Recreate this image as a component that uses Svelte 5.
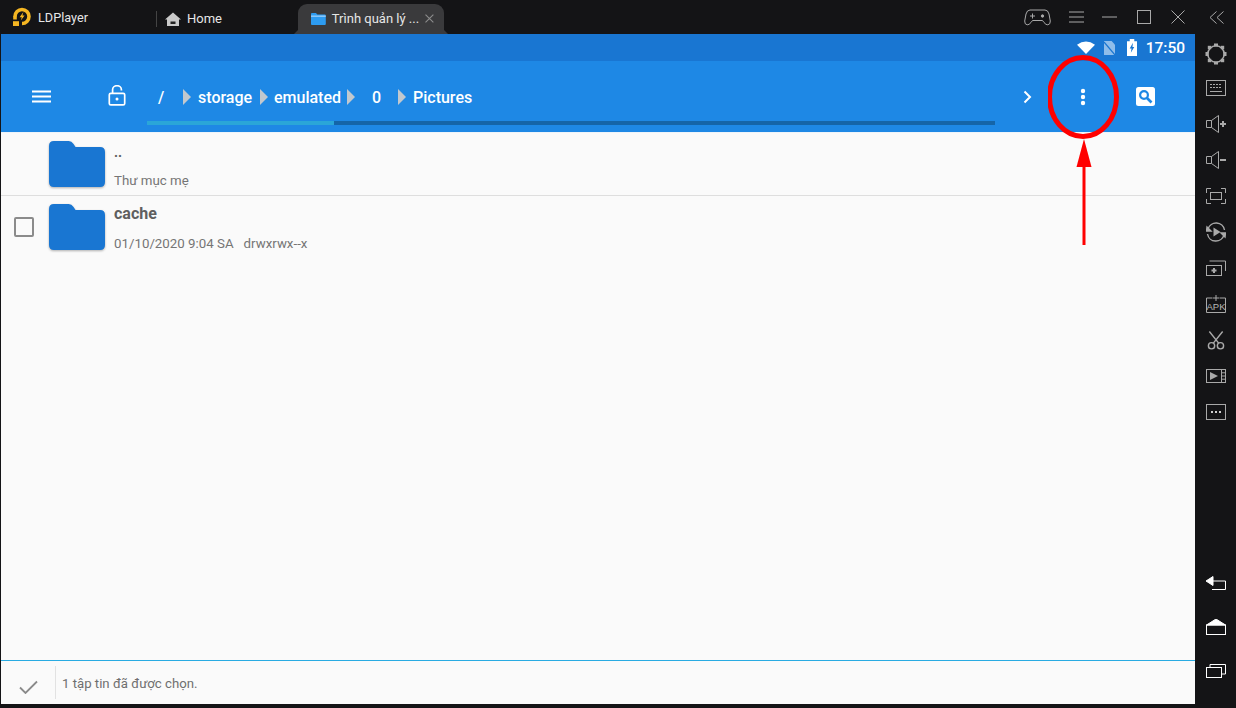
<script>
  const crumbs = [
    { t: '/', cls: 'slash' },
    { t: 'storage', cls: 'c1' },
    { t: 'emulated', cls: 'c2' },
    { t: '0', cls: 'zero' },
    { t: 'Pictures', cls: 'c4' }
  ];
  const folderPath = 'M0 5 Q0 0 5 0 H20 Q23 0 25 3 L27 6 H52 Q57 6 57 11 V41 Q57 46 52 46 H5 Q0 46 0 41Z';
</script>

<div class="win">
  <header class="title">
    <div class="brand">
      <svg width="22" height="22" viewBox="0 0 22 22">
        <path d="M3 10.5 A7 7 0 1 1 10 17.5" fill="none" stroke="#f5b622" stroke-width="3.6"/>
        <rect x="1.2" y="10" width="3.6" height="3.5" fill="#f5b622"/>
        <rect x="1" y="15.2" width="6" height="4.8" fill="#f5b622"/>
        <path d="M11.4 6 L7.6 11.2 H9.8 L8.8 14.6 L12.6 9.6 H10.4Z" fill="#f5b622"/>
      </svg>
      <span>LDPlayer</span>
    </div>
    <i class="sep"></i>
    <div class="home">
      <svg width="16" height="14" viewBox="0 0 16 14"><path d="M8 0.5 L16 7.5 H14 V14 H2 V7.5 H0Z" fill="#c9c9c9"/><rect x="5.5" y="9.5" width="5" height="2.5" fill="#222"/></svg>
      <span>Home</span>
    </div>
    <div class="tab">
      <svg width="15" height="12" viewBox="0 0 15 12"><path d="M0 1 Q0 0 1 0 H5 L6.5 1.5 H14 Q15 1.5 15 2.5 V11 Q15 12 14 12 H1 Q0 12 0 11Z" fill="#2d9bf0"/><rect x="0" y="2.6" width="15" height="1" fill="#bfe0fb"/></svg>
      <span>Trình quản lý ...</span>
      <svg class="x" width="9" height="9" viewBox="0 0 9 9"><path d="M0.5 0.5 L8.5 8.5 M8.5 0.5 L0.5 8.5" stroke="#8d8d8d" stroke-width="1.1"/></svg>
    </div>
    <div class="controls">
      <svg width="27" height="17" viewBox="0 0 27 17" fill="none" stroke="#a9a9a9" stroke-width="1"><path d="M6 1 H21 Q24 1 25 5 L26.3 12 Q26.5 15.5 23.8 15.8 Q22 16 20 13.5 L18.5 11.5 H8.5 L7 13.5 Q5 16 3.2 15.8 Q0.5 15.5 0.7 12 L2 5 Q3 1 6 1Z"/><path d="M6 7 H11 M8.5 4.5 V9.5"/><circle cx="18.5" cy="7" r="1.2" fill="#a9a9a9"/></svg>
      <svg width="15" height="12" viewBox="0 0 15 12" stroke="#a9a9a9"><path d="M0 1 H15 M0 6 H15 M0 11 H15"/></svg>
      <svg width="15" height="2" viewBox="0 0 15 2" stroke="#a9a9a9"><path d="M0 1 H15"/></svg>
      <svg width="14" height="14" viewBox="0 0 14 14" fill="none" stroke="#a9a9a9"><rect x="0.5" y="0.5" width="13" height="13"/></svg>
      <svg width="14" height="14" viewBox="0 0 14 14" stroke="#a9a9a9"><path d="M0.5 0.5 L13.5 13.5 M13.5 0.5 L0.5 13.5"/></svg>
      <svg class="collapse" width="15" height="13" viewBox="0 0 15 13" fill="none" stroke="#a9a9a9"><path d="M7.5 0.5 L1 6.5 L7.5 12.5 M14.5 0.5 L8 6.5 L14.5 12.5"/></svg>
    </div>
  </header>

  <div class="body">
    <main class="screen">
      <div class="status">
        <svg width="18" height="13" viewBox="0 0 20 14" preserveAspectRatio="none"><path d="M0 4 Q10 -3 20 4 L10 14Z" fill="#fff"/></svg>
        <svg class="nosim" width="11" height="14" viewBox="0 0 13 15" preserveAspectRatio="none"><path d="M0 0 H9 L13 4 V15 H0Z" fill="#8fbdea"/><path d="M0 1 L13 15" stroke="#1976d2" stroke-width="1.4"/></svg>
        <svg class="batt" width="10" height="17" viewBox="0 0 11 16" preserveAspectRatio="none"><path d="M3 0 H8 V2 H11 V16 H0 V2 H3Z" fill="#fff"/><path d="M6.5 3.5 L3 9 H5 L4.2 13 L8 7.5 H6Z" fill="#1976d2"/></svg>
        <span class="clock">17:50</span>
      </div>

      <div class="appbar">
        <div class="toolrow">
          <svg class="menu" width="19" height="13" viewBox="0 0 19 13" stroke="#fff" stroke-width="2"><path d="M0 1.5 H19 M0 6.5 H19 M0 11.5 H19"/></svg>
          <svg class="lock" width="18" height="21" viewBox="0 0 18 21" fill="none" stroke="#fff" stroke-width="1.7"><rect x="1.3" y="8.3" width="15.4" height="11.6" rx="1.5"/><path d="M4.6 8 V4.8 A4.4 4.1 0 0 1 13.4 4.8 V5.6"/><circle cx="9" cy="14" r="1.5" fill="#fff" stroke="none"/></svg>
          <nav class="crumbs">
            {#each crumbs as c, i}
              {#if i > 0}<i class="arrow a{i}"></i>{/if}
              <span class={c.cls}>{c.t}</span>
            {/each}
          </nav>
          <svg class="more" width="9" height="14" viewBox="0 0 9 14" fill="none" stroke="#fff" stroke-width="2"><path d="M1.5 1.5 L7 7 L1.5 12.5"/></svg>
          <svg class="dots" width="6" height="18" viewBox="0 0 6 18" fill="#fff"><circle cx="3" cy="3" r="2.2"/><circle cx="3" cy="9" r="2.2"/><circle cx="3" cy="15" r="2.2"/></svg>
          <svg class="search" width="19" height="19" viewBox="0 0 19 19"><rect width="19" height="19" rx="2.5" fill="#fff"/><circle cx="8" cy="8" r="3.9" fill="none" stroke="#1e88e5" stroke-width="2.2"/><path d="M11 11 L15.5 15.5" stroke="#1e88e5" stroke-width="2.6"/></svg>
        </div>
        <div class="progress"><div class="fill"></div></div>
      </div>

      <div class="list">
        <div class="row first">
          <span class="check none"></span>
          <svg class="folder" width="56" height="46" viewBox="0 0 57 46" preserveAspectRatio="none"><path d={folderPath} fill="#1976d2"/></svg>
          <div class="meta">
            <div class="name up">..</div>
            <div class="sub">Thư mục mẹ</div>
          </div>
        </div>
        <div class="row">
          <span class="check"></span>
          <svg class="folder" width="56" height="46" viewBox="0 0 57 46" preserveAspectRatio="none"><path d={folderPath} fill="#1976d2"/></svg>
          <div class="meta">
            <div class="name">cache</div>
            <div class="sub">01/10/2020 9:04 SA<span class="perm">drwxrwx--x</span></div>
          </div>
        </div>
      </div>

      <footer class="foot">
        <svg class="tick" width="19" height="14" viewBox="0 0 19 14" fill="none" stroke="#8a8a8a" stroke-width="1.8"><path d="M1 7.5 L6.5 13 L18 1.5"/></svg>
        <i class="vr"></i>
        <span class="msg">1 tập tin đã được chọn.</span>
      </footer>
    </main>

    <aside class="side">
      <div class="tools">
        <div class="ti gear"><svg width="22" height="22" viewBox="0 0 22 22" fill="none" stroke="#a9a9a9"><circle cx="11" cy="11" r="8.2" stroke-width="1.6"/><g fill="#a9a9a9" stroke="none"><rect x="9" y="0.5" width="4" height="3"/><rect x="9" y="18.5" width="4" height="3"/><rect x="0.5" y="9" width="3" height="4"/><rect x="18.5" y="9" width="3" height="4"/><rect x="2.8" y="2.8" width="3.4" height="3.4"/><rect x="15.8" y="2.8" width="3.4" height="3.4"/><rect x="2.8" y="15.8" width="3.4" height="3.4"/><rect x="15.8" y="15.8" width="3.4" height="3.4"/></g></svg></div>
        <div class="ti"><svg width="20" height="16" viewBox="0 0 20 16" fill="none" stroke="#a9a9a9"><rect x="0.5" y="0.5" width="19" height="15"/><path d="M4 4.5 H16 M4 7.5 H16" stroke-dasharray="2 1"/><path d="M4 11.5 H16"/></svg></div>
        <div class="ti"><svg width="20" height="18" viewBox="0 0 20 18" fill="none" stroke="#a9a9a9"><path d="M0.5 5.5 H5.5 V12.5 H0.5Z M5.5 5.5 L12.5 0.5 V17.5 L5.5 12.5"/><path d="M14 9 H20 M17 6 V12" stroke-width="2"/></svg></div>
        <div class="ti"><svg width="20" height="18" viewBox="0 0 20 18" fill="none" stroke="#a9a9a9"><path d="M0.5 5.5 H5.5 V12.5 H0.5Z M5.5 5.5 L12.5 0.5 V17.5 L5.5 12.5"/><path d="M14 9 H20" stroke-width="2"/></svg></div>
        <div class="ti"><svg width="20" height="16" viewBox="0 0 20 16" fill="none" stroke="#a9a9a9"><path d="M0.5 5 V0.5 H5 M15 0.5 H19.5 V5 M19.5 11 V15.5 H15 M5 15.5 H0.5 V11"/><rect x="4.5" y="4.5" width="11" height="7"/></svg></div>
        <div class="ti"><svg width="20" height="20" viewBox="0 0 20 20" fill="none" stroke="#a9a9a9" stroke-width="1.4"><path d="M2 7 A8.5 8.5 0 0 1 18.5 8 M18 13 A8.5 8.5 0 0 1 1.5 12"/><path d="M0.5 9 H5 L1 5Z M15 11 H19.5 L19 15Z" fill="#a9a9a9"/><path d="M7.5 5.5 L14.5 10 L7.5 14.5Z" fill="#a9a9a9" stroke="none"/></svg></div>
        <div class="ti"><svg width="20" height="16" viewBox="0 0 20 16" fill="none" stroke="#a9a9a9"><path d="M3.5 1 H19.5 V11"/><rect x="0.5" y="5.5" width="15" height="10"/><path d="M8 8 V13 M5.5 10.5 H10.5" stroke-width="2"/></svg></div>
        <div class="ti"><svg width="20" height="18" viewBox="0 0 20 18" fill="none" stroke="#a9a9a9"><path d="M0.5 3 H6.5 M13.5 3 H19.5 V17.5 H0.5 V3"/><path d="M10 0 V6 M7 3 H13"/><text x="10" y="15" text-anchor="middle" class="apk">APK</text></svg></div>
        <div class="ti"><svg width="18" height="19" viewBox="0 0 18 20" fill="none" stroke="#a9a9a9" stroke-width="1.5"><circle cx="4.3" cy="15.5" r="3.3"/><circle cx="13.7" cy="15.5" r="3.3"/><path d="M2 0.5 L12 13 M16 0.5 L6 13"/></svg></div>
        <div class="ti"><svg width="20" height="14" viewBox="0 0 20 14" fill="none" stroke="#a9a9a9"><rect x="0.5" y="0.5" width="19" height="13"/><path d="M15.5 0.5 V13.5 M15.5 3.8 H19.5 M15.5 7 H19.5 M15.5 10.2 H19.5"/><path d="M4 3 L12 7 L4 11Z" fill="#a9a9a9" stroke="none"/></svg></div>
        <div class="ti"><svg width="20" height="16" viewBox="0 0 20 16" fill="none" stroke="#a9a9a9"><rect x="0.5" y="0.5" width="19" height="15"/><path d="M5 8 H7 M9 8 H11 M13 8 H15" stroke="#cfcfcf" stroke-width="2"/></svg></div>
      </div>
      <div class="nav">
        <div class="ni"><svg width="20" height="14" viewBox="0 0 20 14" fill="none" stroke="#fff"><path d="M0 5 L7 0.5 V9.5Z" fill="#fff"/><path d="M6 5 H19.5 V13.5 H6"/></svg></div>
        <div class="ni"><svg width="20" height="16" viewBox="0 0 20 16" fill="none" stroke="#fff"><path d="M10 0 L19.5 6 H0.5Z" fill="#fff"/><rect x="0.5" y="6" width="19" height="9.5"/></svg></div>
        <div class="ni"><svg width="20" height="14" viewBox="0 0 20 14" fill="none" stroke="#fff"><path d="M4 3 V0.5 H19.5 V10 H16"/><rect x="0.5" y="3.5" width="15" height="10"/></svg></div>
      </div>
    </aside>
  </div>

  <svg class="annot" width="120" height="200" viewBox="0 0 120 200" fill="none">
    <ellipse cx="35" cy="42" rx="33.5" ry="39.5" stroke="#f00" stroke-width="5"/>
    <path d="M36 84 L43.5 112 H28.5Z" fill="#f00"/>
    <path d="M36 108 V190" stroke="#f00" stroke-width="3"/>
  </svg>
</div>

<style>
  :global(body) { margin: 0; background: #141416; }
  .win {
    position: relative;
    width: 1236px;
    height: 708px;
    overflow: hidden;
    background: #141416;
    font-family: Roboto, "Liberation Sans", sans-serif;
    display: flex;
    flex-direction: column;
  }
  .title {
    height: 34px;
    flex: none;
    display: flex;
    align-items: center;
    color: #e6e6e6;
    font-size: 13px;
  }
  .brand { display: flex; align-items: center; gap: 4px; margin-left: 12px; width: 144px; box-sizing: border-box; font-size: 12.7px; }
  .sep { width: 1px; height: 16px; background: #444; margin-top: 3px; }
  .home { display: flex; align-items: center; gap: 6px; margin-left: 8px; width: 133px; padding-top: 3px; }
  .tab {
    position: relative;
    width: 146px;
    height: 30px;
    margin-top: 4px;
    box-sizing: border-box;
    padding: 0 10px 1px 13px;
    background: #3a3a3c;
    border-radius: 9px 9px 0 0;
    display: flex;
    align-items: center;
    gap: 6px;
    white-space: nowrap;
  }
  .tab::before, .tab::after {
    content: "";
    position: absolute;
    bottom: 0;
    width: 5px;
    height: 5px;
    background: #3a3a3c;
  }
  .tab::before { left: -4px; clip-path: polygon(100% 0, 100% 100%, 0 100%); }
  .tab::after { right: -4px; clip-path: polygon(0 0, 100% 100%, 0 100%); }
  .x { margin-left: auto; }
  .controls { margin-left: auto; display: flex; align-items: center; gap: 0; height: 34px; }
  .controls svg:nth-child(1) { margin-right: 18px; }
  .controls svg:nth-child(2) { margin-right: 18px; }
  .controls svg:nth-child(3) { margin-right: 20px; }
  .controls svg:nth-child(4) { margin-right: 20px; }
  .controls svg:nth-child(5) { margin-right: 24px; }
  .collapse { margin-right: 12px; }

  .body { flex: 1; display: flex; min-height: 0; padding-left: 1px; }
  .screen { flex: 1; min-width: 0; display: flex; flex-direction: column; background: #fafafa; margin-bottom: 4px; }
  .side { width: 41px; flex: none; display: flex; flex-direction: column; padding-top: 4px; padding-bottom: 15px; box-sizing: border-box; }
  .ti { height: 36px; display: flex; align-items: center; justify-content: center; }
  .ti.gear { height: 32px; }
  .nav { margin-top: auto; }
  .ni { height: 44px; display: flex; align-items: center; justify-content: center; }
  .apk { font: 9.5px "Liberation Sans", sans-serif; fill: #b5b5b5; stroke: none; }

  .status {
    height: 27px;
    flex: none;
    background: #1976d2;
    display: flex;
    align-items: center;
    justify-content: flex-end;
    padding-right: 10px;
    color: #fff;
  }
  .nosim { margin-left: 9px; }
  .batt { margin-left: 12px; }
  .clock { margin-left: 9px; font-size: 15.5px; font-weight: 500; }

  .appbar { height: 71px; flex: none; background: #1e88e5; display: flex; flex-direction: column; border-bottom: 1px solid #eef4fa; box-sizing: content-box; }
  .toolrow { height: 60px; display: flex; align-items: center; position: relative; padding-top: 11px; box-sizing: border-box; }
  .menu { margin-left: 31px; }
  .lock { margin-left: 57px; margin-top: -2px; }
  .crumbs { margin-left: 32px; display: flex; align-items: center; color: #fff; font-size: 16px; font-weight: 500; width: 855px; white-space: nowrap; }
  .crumbs span { display: block; padding-top: 1px; }
  .slash { width: 25px; }
  .c1 { width: 62px; }
  .c2 { width: 73px; }
  .zero { width: 26px; margin-left: 17px; }
  .arrow { width: 0; height: 0; border-left: 8px solid #c2c8ce; border-top: 8.5px solid transparent; border-bottom: 8.5px solid transparent; margin-right: 7px; }
  .arrow.a3 { margin-right: 0; }
  .arrow.a2 { margin-right: 6px; }
  .more { position: absolute; left: 1022px; top: 29px; }
  .dots { position: absolute; left: 1079px; top: 27px; }
  .search { position: absolute; left: 1135px; top: 26px; }
  .progress { margin: 0 0 0 146px; width: 848px; height: 4px; background: #1565a8; }
  .fill { width: 187px; height: 100%; background: #2aa6d8; }

  .list { flex: 1; min-height: 0; }
  .row { height: 62px; display: flex; position: relative; color: #616161; }
  .row.first { border-bottom: 1px solid #dedede; }
  .check { width: 16px; height: 16px; border: 2px solid #8b8b8b; border-radius: 2px; margin: 21px 0 0 13px; flex: none; box-sizing: content-box; }
  .check.none { visibility: hidden; }
  .folder { margin: 8px 0 0 15px; flex: none; filter: drop-shadow(0 1px 1px rgba(0,0,0,.3)); }
  .meta { margin-left: 9px; padding-top: 8px; }
  .name { font-size: 16px; font-weight: 700; line-height: 20px; height: 31px; color: #5f5f5f; }
  .name.up { font-size: 14px; line-height: 22px; }
  .sub { font-size: 13.3px; line-height: 16px; color: #757575; padding-top: 1px; white-space: nowrap; }
  .perm { margin-left: 10px; }

  .foot { height: 43px; flex: none; border-top: 1px solid #29abe2; display: flex; align-items: center; color: #6f6f6f; font-size: 13.2px; }
  .msg { padding-top: 1px; }
  .tick { margin-left: 18px; margin-top: 8px; }
  .vr { width: 1px; height: 33px; background: #e2e2e2; margin-left: 17px; margin-right: 6px; }

  .annot { position: absolute; left: 1048px; top: 55px; pointer-events: none; }
</style>
